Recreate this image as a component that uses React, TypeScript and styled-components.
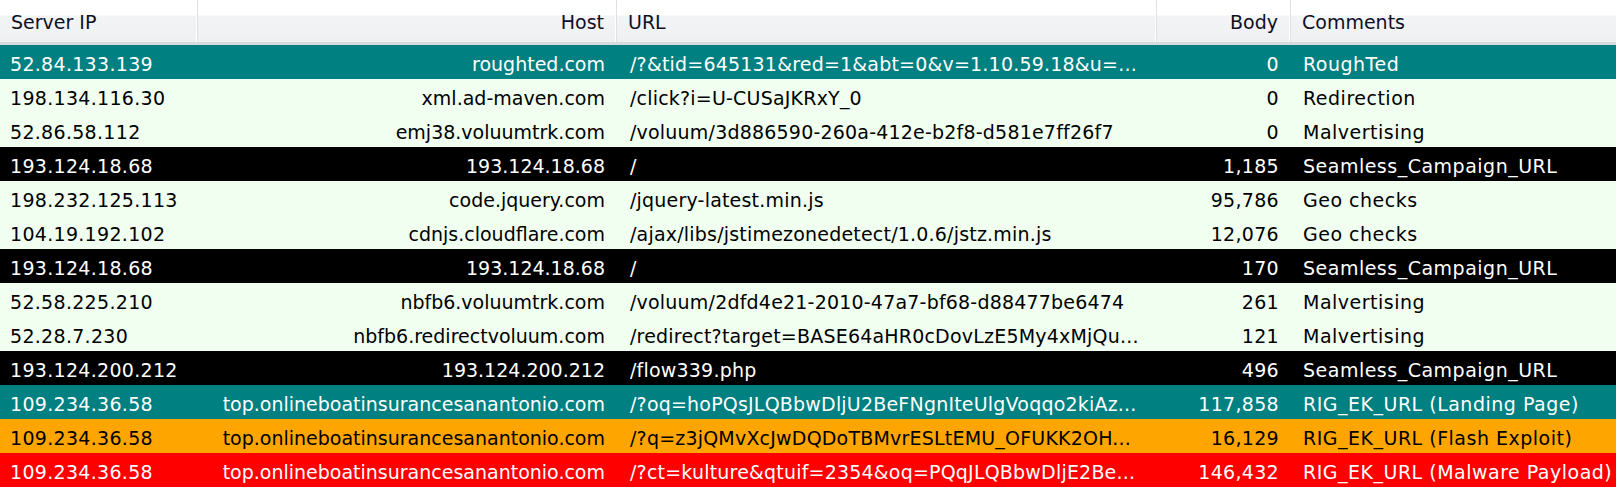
import styled, { createGlobalStyle } from "styled-components";

const GlobalStyle = createGlobalStyle`
  html, body {
    margin: 0;
    padding: 0;
    background: #ffffff;
  }
  body {
    font-family: "DejaVu Sans", Verdana, sans-serif;
  }
`;

const COLUMNS = "198px 419px 540px 134px 1fr";

const Grid = styled.div`
  width: 1616px;
  display: flex;
  flex-direction: column;
  font-size: 19px;
`;

const HeaderRow = styled.div`
  display: grid;
  grid-template-columns: ${COLUMNS};
  height: 42px;
  background: linear-gradient(to bottom, #ffffff 0, #ffffff 15px, #f3f4f6 16px, #eff0f2 100%);
  border-bottom: 3px solid #d9dadc;
`;

const HeaderCell = styled.div<{ $right?: boolean; $last?: boolean }>`
  display: flex;
  align-items: center;
  justify-content: ${(p) => (p.$right ? "flex-end" : "flex-start")};
  padding: 0 12px 0 ${(p) => (p.$right ? "0" : "11px")};
  padding-top: 2px;
  color: #0f1022;
  border-right: ${(p) => (p.$last ? "none" : "1px solid #dde0e5")};
  box-shadow: ${(p) => (p.$last ? "none" : "inset -1px 0 0 #ffffff")};
  box-sizing: border-box;
  white-space: nowrap;
`;

type Tone = "teal" | "mint" | "black" | "orange" | "red";

const tones: Record<Tone, { bg: string; fg: string }> = {
  teal: { bg: "#008080", fg: "#ffffff" },
  mint: { bg: "#f0fff0", fg: "#000000" },
  black: { bg: "#000000", fg: "#ffffff" },
  orange: { bg: "#ffa500", fg: "#000000" },
  red: { bg: "#ff0000", fg: "#ffffff" },
};

const Row = styled.div<{ $tone: Tone }>`
  display: grid;
  grid-template-columns: ${COLUMNS};
  height: 34px;
  background: ${(p) => tones[p.$tone].bg};
  color: ${(p) => tones[p.$tone].fg};
`;

const Cell = styled.div<{ $right?: boolean; $padLeft?: number; $spacing?: number }>`
  display: flex;
  align-items: center;
  justify-content: ${(p) => (p.$right ? "flex-end" : "flex-start")};
  padding: 3px 12px 0 ${(p) => (p.$right ? 0 : p.$padLeft ?? 12)}px;
  letter-spacing: ${(p) => p.$spacing ?? 0}px;
  white-space: nowrap;
  overflow: hidden;
  box-sizing: border-box;
`;

interface Entry {
  ip: string;
  host: string;
  url: string;
  body: string;
  comment: string;
  tone: Tone;
}

const entries: Entry[] = [
  { ip: "52.84.133.139", host: "roughted.com", url: "/?&tid=645131&red=1&abt=0&v=1.10.59.18&u=...", body: "0", comment: "RoughTed", tone: "teal" },
  { ip: "198.134.116.30", host: "xml.ad-maven.com", url: "/click?i=U-CUSaJKRxY_0", body: "0", comment: "Redirection", tone: "mint" },
  { ip: "52.86.58.112", host: "emj38.voluumtrk.com", url: "/voluum/3d886590-260a-412e-b2f8-d581e7ff26f7", body: "0", comment: "Malvertising", tone: "mint" },
  { ip: "193.124.18.68", host: "193.124.18.68", url: "/", body: "1,185", comment: "Seamless_Campaign_URL", tone: "black" },
  { ip: "198.232.125.113", host: "code.jquery.com", url: "/jquery-latest.min.js", body: "95,786", comment: "Geo checks", tone: "mint" },
  { ip: "104.19.192.102", host: "cdnjs.cloudflare.com", url: "/ajax/libs/jstimezonedetect/1.0.6/jstz.min.js", body: "12,076", comment: "Geo checks", tone: "mint" },
  { ip: "193.124.18.68", host: "193.124.18.68", url: "/", body: "170", comment: "Seamless_Campaign_URL", tone: "black" },
  { ip: "52.58.225.210", host: "nbfb6.voluumtrk.com", url: "/voluum/2dfd4e21-2010-47a7-bf68-d88477be6474", body: "261", comment: "Malvertising", tone: "mint" },
  { ip: "52.28.7.230", host: "nbfb6.redirectvoluum.com", url: "/redirect?target=BASE64aHR0cDovLzE5My4xMjQu...", body: "121", comment: "Malvertising", tone: "mint" },
  { ip: "193.124.200.212", host: "193.124.200.212", url: "/flow339.php", body: "496", comment: "Seamless_Campaign_URL", tone: "black" },
  { ip: "109.234.36.58", host: "top.onlineboatinsurancesanantonio.com", url: "/?oq=hoPQsJLQBbwDljU2BeFNgnIteUlgVoqqo2kiAz...", body: "117,858", comment: "RIG_EK_URL (Landing Page)", tone: "teal" },
  { ip: "109.234.36.58", host: "top.onlineboatinsurancesanantonio.com", url: "/?q=z3jQMvXcJwDQDoTBMvrESLtEMU_OFUKK2OH...", body: "16,129", comment: "RIG_EK_URL (Flash Exploit)", tone: "orange" },
  { ip: "109.234.36.58", host: "top.onlineboatinsurancesanantonio.com", url: "/?ct=kulture&qtuif=2354&oq=PQqJLQBbwDljE2Be...", body: "146,432", comment: "RIG_EK_URL (Malware Payload)", tone: "red" },
];

export default function App() {
  return (
    <>
      <GlobalStyle />
      <Grid>
        <HeaderRow>
          <HeaderCell>Server IP</HeaderCell>
          <HeaderCell $right>Host</HeaderCell>
          <HeaderCell>URL</HeaderCell>
          <HeaderCell $right>Body</HeaderCell>
          <HeaderCell $last>Comments</HeaderCell>
        </HeaderRow>
        {entries.map((e, i) => (
          <Row key={i} $tone={e.tone}>
            <Cell $padLeft={10} $spacing={0.3}>{e.ip}</Cell>
            <Cell $right>{e.host}</Cell>
            <Cell $padLeft={13} $spacing={0.2}>{e.url}</Cell>
            <Cell $right $spacing={0.3}>{e.body}</Cell>
            <Cell $spacing={0.5}>{e.comment}</Cell>
          </Row>
        ))}
      </Grid>
    </>
  );
}
